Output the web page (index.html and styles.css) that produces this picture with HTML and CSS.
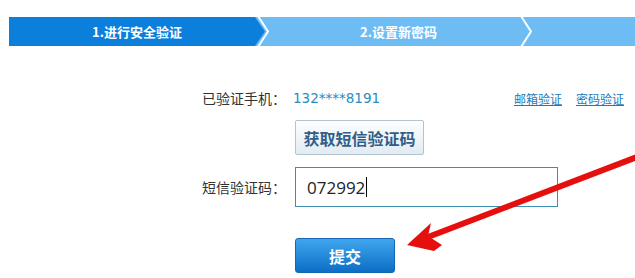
FILE: index.html
```html
<!doctype html>
<html lang="zh-CN">
<head>
    <meta charset="UTF-8">
    <title>找回密码</title>
    <link rel="stylesheet" href="styles.css">
</head>
<body>
    <div class="page">
<!--     steps    -->
        <div class="steps">
            <div class="step done">1.进行安全验证</div>
            <svg class="sep" width="14" height="29" viewBox="0 0 14 29">
                <polyline points="3,-1 13,14.5 3,30" fill="none" stroke="#fff" stroke-width="2"/>
            </svg>
            <div class="step two">2.设置新密码</div>
            <svg class="sep" width="14" height="29" viewBox="0 0 14 29">
                <polyline points="3,-1 13,14.5 3,30" fill="none" stroke="#fff" stroke-width="2"/>
            </svg>
            <div class="step three"></div>
        </div>

<!--     form    -->
        <div class="form">
            <div class="row">
                <span class="label">已验证手机：</span>
                <div class="value">
                    <span class="phone">132****8191</span>
                    <div class="links">
                        <a href="#">邮箱验证</a>
                        <a href="#">密码验证</a>
                    </div>
                </div>
            </div>
            <div class="row row-btn">
                <span class="label"></span>
                <div class="value">
                    <button class="get-code">获取短信验证码</button>
                </div>
            </div>
            <div class="row row-input">
                <span class="label">短信验证码：</span>
                <div class="value">
                    <div class="code-input">072992<span class="caret"></span></div>
                </div>
            </div>
            <div class="row row-submit">
                <span class="label"></span>
                <div class="value">
                    <button class="submit">提交</button>
                </div>
            </div>
        </div>

<!--     red arrow    -->
        <svg class="arrow" width="635" height="278" viewBox="0 0 635 278">
            <line x1="645" y1="154" x2="428" y2="237" stroke="#e5100d" stroke-width="6"/>
            <polygon points="407,245 431,223 428,236 442,245 434,251" fill="#e5100d"/>
        </svg>
    </div>
</body>
</html>
```

FILE: styles.css
```css
* {
    margin: 0;
    padding: 0;
    box-sizing: border-box;
}
body {
    background: #fff;
    font-family: "Noto Sans CJK SC", "Liberation Sans", sans-serif;
    color: #333;
}
/*page start*/
.page {
    position: relative;
    width: 635px;
    height: 278px;
    overflow: hidden;
}

/*steps start*/
.steps {
    display: flex;
    height: 29px;
    margin: 17px 0 0 9px;
    background: #6dbdf4;
}
.steps .step {
    display: flex;
    align-items: center;
    justify-content: center;
    height: 100%;
    font-size: 13px;
    font-weight: bold;
    color: #fff;
}
.steps .step.done {
    flex: 0 0 256px;
    background: #0b7fdb;
    clip-path: polygon(0 0, calc(100% - 10px) 0, 100% 50%, calc(100% - 10px) 100%, 0 100%);
}
.steps .sep {
    flex: 0 0 14px;
    margin-left: -10px;
}
.steps .step.two {
    flex: 0 0 259px;
}
.steps .step.three {
    flex: 1;
}
/*steps end*/

/*form start*/
.form {
    display: flex;
    flex-direction: column;
    padding: 42px 0 0 202px;
}
.form .row {
    display: flex;
    align-items: center;
}
.form .label {
    flex: 0 0 93px;
    font-size: 14px;
    color: #333;
}
.form .value {
    display: flex;
    align-items: center;
    width: 329px;
}
.form .row:first-child {
    height: 20px;
}
.form .phone {
    margin-left: -2px;
    font-family: "DejaVu Sans", sans-serif;
    font-size: 13.5px;
    color: #2a8cc0;
}
.form .links {
    display: flex;
    gap: 14px;
    margin-left: auto;
}
.form .links a {
    font-size: 12px;
    color: #1f78b8;
    text-decoration: underline;
}
.form .row-btn {
    margin-top: 12px;
}
.form .get-code {
    width: 129px;
    height: 35px;
    border: 1px solid #b3c3cf;
    border-radius: 2px;
    background: linear-gradient(#fdfeff, #e2ebf2);
    font-family: inherit;
    font-size: 16px;
    font-weight: bold;
    color: #2f5e88;
}
.form .row-input {
    margin-top: 12px;
}
.form .code-input {
    display: flex;
    align-items: center;
    width: 263px;
    height: 40px;
    padding-left: 11px;
    border: 1px solid #3d8fb2;
    font-family: "Open Sans", sans-serif;
    font-size: 17px;
    color: #222;
}
.form .caret {
    width: 1px;
    height: 20px;
    margin-left: 1px;
    background: #000;
}
.form .row-submit {
    margin-top: 31px;
}
.form .submit {
    width: 100px;
    height: 35px;
    border: 1px solid #1366b2;
    border-radius: 3px;
    background: linear-gradient(#3fa6ee, #0c6ec6);
    font-family: inherit;
    font-size: 16px;
    font-weight: bold;
    color: #fff;
}
/*form end*/

.arrow {
    position: absolute;
    top: 0;
    left: 0;
    pointer-events: none;
}
```
